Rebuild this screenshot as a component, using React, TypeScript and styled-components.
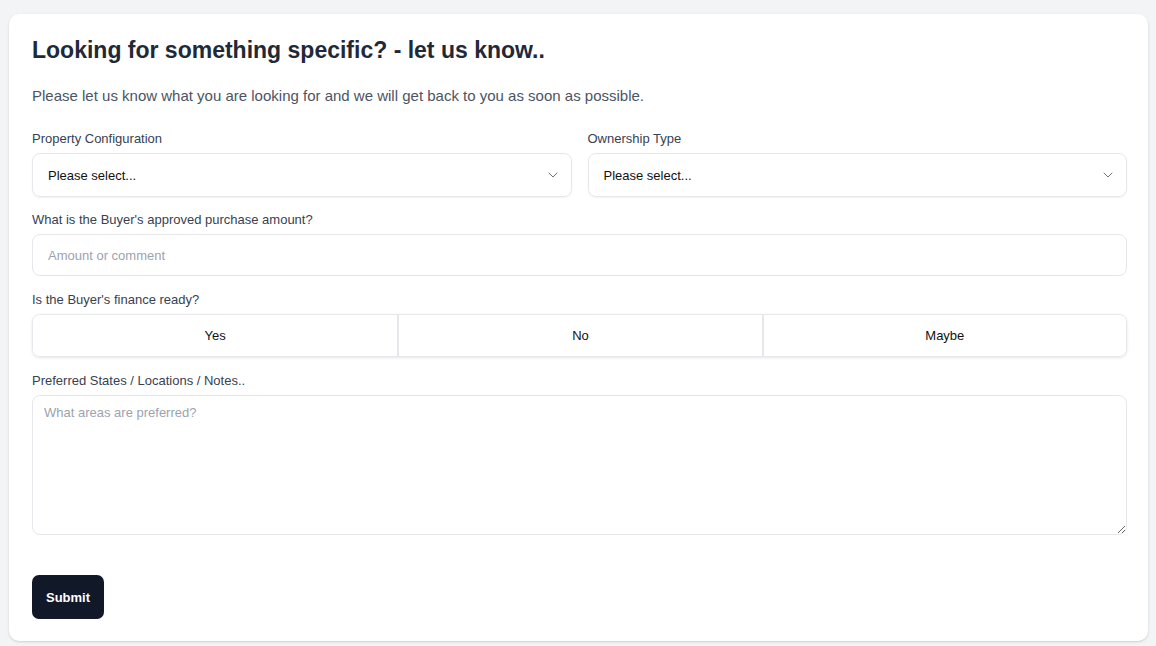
import styled, { createGlobalStyle } from "styled-components";
import { ChevronDown } from "lucide-react";

const GlobalStyle = createGlobalStyle`
  html, body {
    margin: 0;
    background: #f3f4f6;
    font-family: "Liberation Sans", Arial, sans-serif;
  }
  body {
    padding: 14px 8px 6px 9px;
  }
  * { box-sizing: border-box; }
`;

const Card = styled.form`
  background: #fff;
  border-radius: 10px;
  box-shadow: 0 1px 3px rgba(0, 0, 0, 0.1), 0 1px 2px rgba(0, 0, 0, 0.06);
  padding: 20px 21px 22px 23px;
  display: flex;
  flex-direction: column;
`;

const Title = styled.h2`
  margin: 0;
  font-size: 23px;
  line-height: 32px;
  font-weight: 700;
  color: #1f2937;
`;

const Intro = styled.p`
  margin: 18px 0 0;
  font-size: 15px;
  line-height: 24px;
  color: #4b5563;
`;

const Row = styled.div`
  display: grid;
  grid-template-columns: 1fr 1fr;
  gap: 16px;
  margin-top: 21px;
`;

const Field = styled.div<{ $top?: number }>`
  display: flex;
  flex-direction: column;
  gap: 4px;
  margin-top: ${(p) => p.$top ?? 0}px;
`;

const Label = styled.label`
  font-size: 13px;
  line-height: 20px;
  color: #374151;
`;

const SelectBox = styled.div`
  height: 44px;
  border: 1px solid #e5e7eb;
  border-radius: 8px;
  box-shadow: 0 1px 2px rgba(0, 0, 0, 0.05);
  display: flex;
  align-items: center;
  justify-content: space-between;
  padding: 0 10px 0 15px;
  font-size: 13px;
  color: #111;
  svg { color: #6b7280; }
`;

const TextInput = styled.input`
  height: 42px;
  border: 1px solid #e5e7eb;
  border-radius: 8px;
  padding: 0 15px;
  font: inherit;
  font-size: 13px;
  color: #111;
  outline: none;
  &::placeholder { color: #9ca3af; }
`;

const Segments = styled.div`
  display: grid;
  grid-template-columns: repeat(3, 1fr);
  height: 43px;
  border: 1px solid #e5e7eb;
  border-radius: 8px;
  overflow: hidden;
  box-shadow: 0 1px 3px rgba(0, 0, 0, 0.1);
`;

const Segment = styled.button`
  border: none;
  border-left: 2px solid #e5e7eb;
  background: #fff;
  font: inherit;
  font-size: 13px;
  color: #111;
  &:first-child { border-left: none; }
`;

const Notes = styled.textarea`
  height: 140px;
  border: 1px solid #e5e7eb;
  border-radius: 8px;
  padding: 8px 11px;
  font: inherit;
  font-size: 13px;
  line-height: 18px;
  color: #111;
  outline: none;
  &::placeholder { color: #9ca3af; }
`;

const Submit = styled.button`
  align-self: flex-start;
  margin-top: 40px;
  height: 44px;
  padding: 0 14px;
  border: none;
  border-radius: 7px;
  background: #111827;
  color: #fff;
  font: inherit;
  font-size: 13px;
  font-weight: 700;
`;

export default function App() {
  return (
    <>
      <GlobalStyle />
      <Card onSubmit={(e) => e.preventDefault()}>
        <Title>Looking for something specific? - let us know..</Title>
        <Intro>
          Please let us know what you are looking for and we will get back to you as soon as possible.
        </Intro>
        <Row>
          <Field>
            <Label>Property Configuration</Label>
            <SelectBox>
              <span>Please select...</span>
              <ChevronDown size={16} strokeWidth={1.5} />
            </SelectBox>
          </Field>
          <Field>
            <Label>Ownership Type</Label>
            <SelectBox>
              <span>Please select...</span>
              <ChevronDown size={16} strokeWidth={1.5} />
            </SelectBox>
          </Field>
        </Row>
        <Field $top={13}>
          <Label>What is the Buyer's approved purchase amount?</Label>
          <TextInput placeholder="Amount or comment" />
        </Field>
        <Field $top={14}>
          <Label>Is the Buyer's finance ready?</Label>
          <Segments>
            <Segment type="button">Yes</Segment>
            <Segment type="button">No</Segment>
            <Segment type="button">Maybe</Segment>
          </Segments>
        </Field>
        <Field $top={14}>
          <Label>Preferred States / Locations / Notes..</Label>
          <Notes placeholder="What areas are preferred?" />
        </Field>
        <Submit type="submit">Submit</Submit>
      </Card>
    </>
  );
}
